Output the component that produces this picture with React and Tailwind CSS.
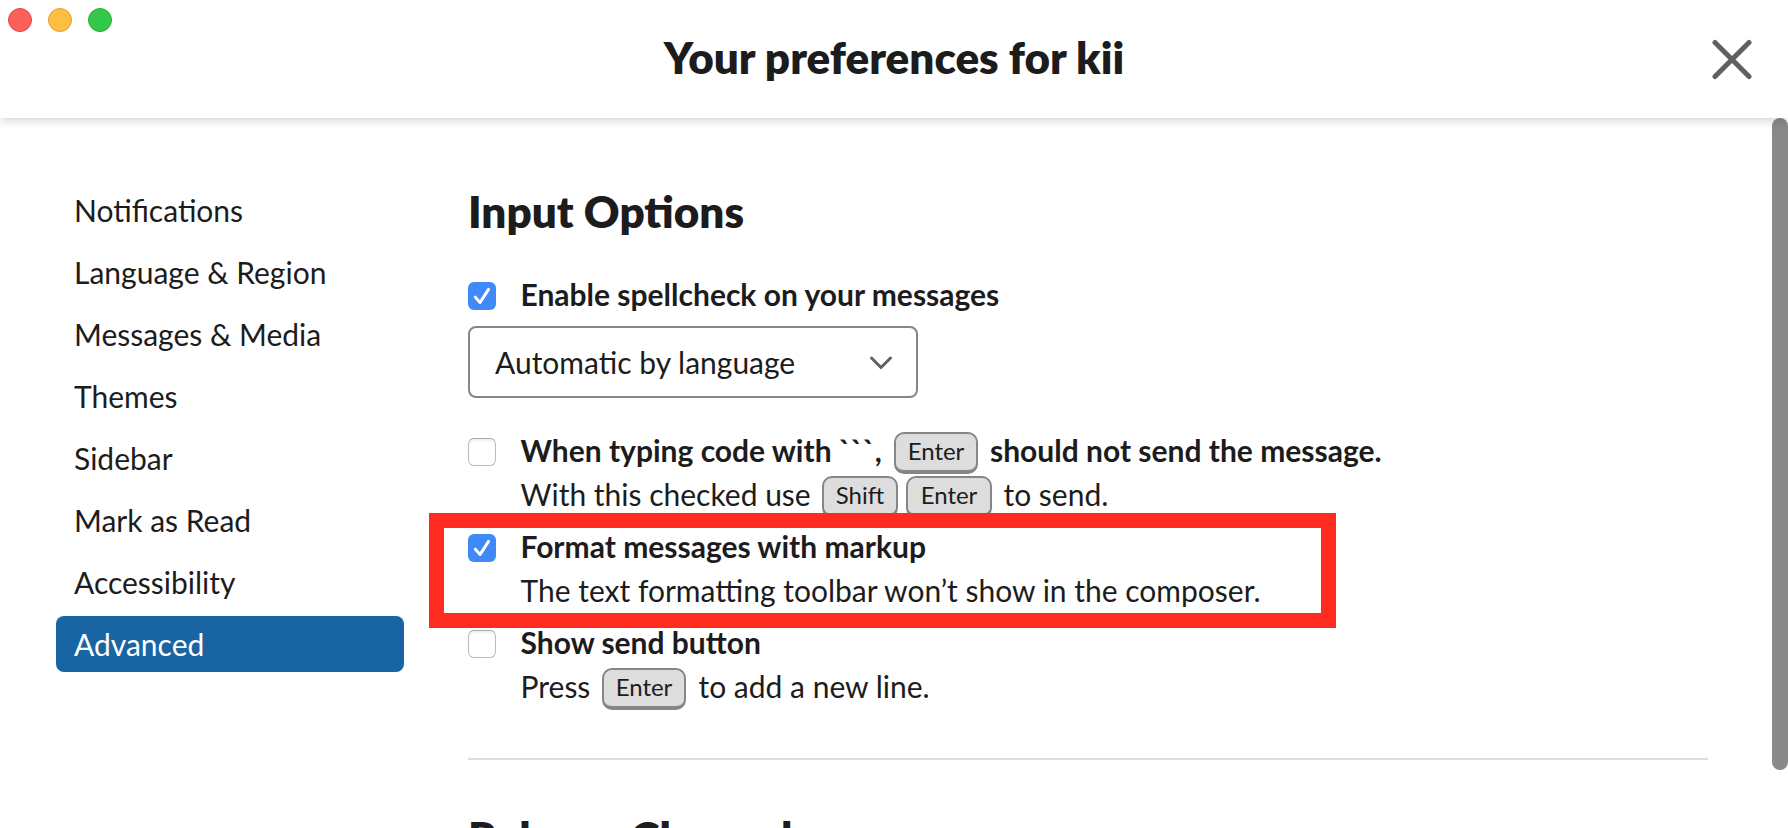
const navItems = [
  'Notifications',
  'Language & Region',
  'Messages & Media',
  'Themes',
  'Sidebar',
  'Mark as Read',
  'Accessibility',
  'Advanced',
];

function Checkbox({ checked }) {
  if (!checked) {
    return (
      <span className="mt-[10px] block size-7 shrink-0 rounded-[6px] border border-[#bdbdbd] border-t-[#a5a5a5] bg-white shadow-[inset_0_2px_2px_rgba(0,0,0,0.06)]" />
    );
  }
  return (
    <span className="mt-[10px] block size-7 shrink-0 rounded-[6px] bg-[#3f8af8]">
      <svg viewBox="0 0 28 28" className="size-7" fill="none">
        <path d="M7.3 15.2 12 20.6 20.6 7.4" stroke="#2f6fd0" strokeOpacity="0.5" strokeWidth="3" strokeLinecap="round" strokeLinejoin="round" transform="translate(0 1)" />
        <path d="M7.3 15.2 12 20.6 20.6 7.4" stroke="#fff" strokeWidth="3" strokeLinecap="round" strokeLinejoin="round" />
      </svg>
    </span>
  );
}

function Key({ children, className }) {
  return (
    <kbd
      className={`mt-1 inline-flex h-[42px] shrink-0 justify-center rounded-[10px] border-2 border-b-4 border-[#868686] bg-[#dddddd] font-[Lato,sans-serif] text-[24px] leading-[34px] font-normal ${className}`}
    >
      {children}
    </kbd>
  );
}

function Option({ checked, title, children }) {
  return (
    <div className="flex">
      <Checkbox checked={checked} />
      <div className="ml-[24.5px] whitespace-nowrap">
        <div className="flex h-11 font-bold">{title}</div>
        {children && <div className="flex h-11">{children}</div>}
      </div>
    </div>
  );
}

export default function App() {
  return (
    <div className="relative flex h-[828px] w-[1788px] flex-col overflow-hidden bg-white font-[Lato,sans-serif] text-[30px] leading-[44px] text-[#1d1c1d]">
      <header className="relative z-10 flex h-[118px] shrink-0 items-center justify-center bg-white pb-1 shadow-[0_2px_10px_rgba(0,0,0,0.19)]">
        <div className="absolute top-2 left-2 flex gap-4">
          <span className="size-6 rounded-full border border-[#e2463f] bg-[#fc605b]" />
          <span className="size-6 rounded-full border border-[#dfa033] bg-[#fdbe41]" />
          <span className="size-6 rounded-full border border-[#27aa35] bg-[#34c84a]" />
        </div>
        <h1 className="text-[44px] leading-[60px] font-extrabold whitespace-nowrap">Your preferences for kii</h1>
        <svg className="absolute top-[38px] right-[35px] size-[42px]" viewBox="0 0 42 42" fill="none">
          <path d="M4 4.5 38 38.5M38 4.5 4 38.5" stroke="#616061" strokeWidth="5" strokeLinecap="round" />
        </svg>
      </header>

      <div className="flex min-h-0 flex-1">
        <nav className="ml-14 flex w-[348px] shrink-0 flex-col gap-[6px] pt-16">
          {navItems.map((item) => (
            <a
              key={item}
              className={
                item === 'Advanced'
                  ? 'h-14 rounded-lg bg-[#1964a3] px-[18px] leading-[56px] text-white'
                  : 'h-14 rounded-lg px-[18px] leading-[56px]'
              }
            >
              {item}
            </a>
          ))}
        </nav>

        <main className="ml-16 w-[1240px] shrink-0 pt-[63px]">
          <h2 className="h-[91px] text-[44px] leading-[60px] font-extrabold">Input Options</h2>
          <Option checked title="Enable spellcheck on your messages" />
          <div className="mt-[10px] mb-[30px] flex h-[72px] w-[450px] items-center justify-between rounded-lg border-2 border-[#868686] pr-[21px] pl-[25px]">
            <span>Automatic by language</span>
            <svg className="size-7" viewBox="0 0 28 28" fill="none">
              <path d="M4.5 10 14 19.5 23.5 10" stroke="#616061" strokeWidth="3" strokeLinecap="round" strokeLinejoin="round" />
            </svg>
          </div>
          <div className="flex flex-col gap-2">
            <Option
              title={
                <>
                  <span className="w-[373.5px]">When typing code with ```,</span>
                  <Key className="w-[84px]">Enter</Key>
                  <span className="ml-3">should not send the message.</span>
                </>
              }
            >
              <span className="w-[301.5px]">With this checked use</span>
              <Key className="w-[76px]">Shift</Key>
              <Key className="ml-2 w-[86px]">Enter</Key>
              <span className="ml-[11.5px]">to send.</span>
            </Option>
            <div className="relative">
              <Option checked title="Format messages with markup">
                The text formatting toolbar won’t show in the composer.
              </Option>
              <div className="absolute top-[-11px] left-[-39px] h-[115px] w-[907px] border-[15px] border-[#fe2b1e]" />
            </div>
            <Option title="Show send button">
              <span className="w-[81.5px]">Press</span>
              <Key className="w-[84px]">Enter</Key>
              <span className="ml-[12.5px]">to add a new line.</span>
            </Option>
          </div>
          <hr className="mt-[50px] border-0 border-t-2 border-[#dddddd]" />
          <h2 className="mt-[47px] text-[44px] leading-[60px] font-extrabold">Release Channel</h2>
        </main>
        <div className="ml-16 h-[652px] w-4 shrink-0 rounded-full bg-[#8a8a8a]" />
      </div>
    </div>
  );
}
